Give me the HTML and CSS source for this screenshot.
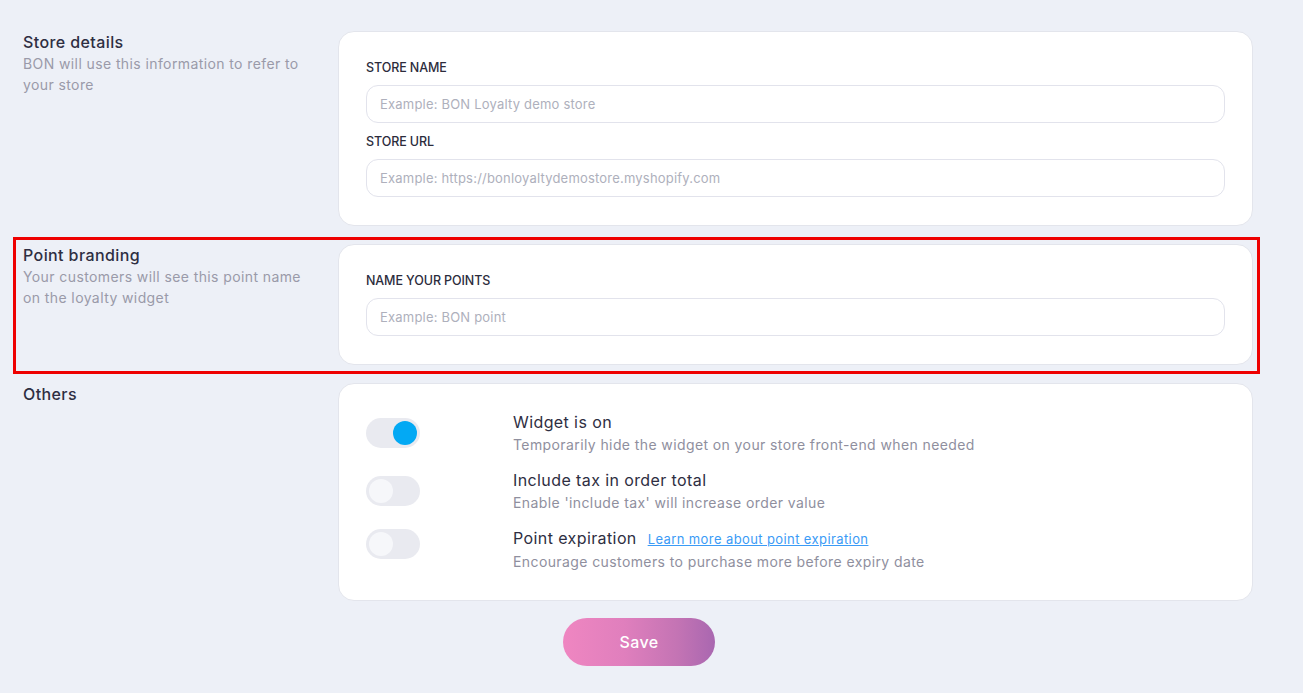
FILE: index.html
```html
<!DOCTYPE html>
<html lang="en">
<head>
<meta charset="utf-8">
<title>Settings</title>
<link rel="stylesheet" href="styles.css">
</head>
<body>
<main class="page">
  <section class="row">
    <div class="info">
      <h2 class="info-title">Store details</h2>
      <p class="info-desc">BON will use this information to refer to your store</p>
    </div>
    <div class="card card--form">
      <div class="field">
        <label class="field-label">STORE NAME</label>
        <input class="field-input" type="text" placeholder="Example: BON Loyalty demo store">
      </div>
      <div class="field">
        <label class="field-label">STORE URL</label>
        <input class="field-input" type="text" placeholder="Example: https://bonloyaltydemostore.myshopify.com">
      </div>
    </div>
  </section>

  <section class="row row--highlight">
    <div class="info">
      <h2 class="info-title">Point branding</h2>
      <p class="info-desc">Your customers will see this point name on the loyalty widget</p>
    </div>
    <div class="card card--form">
      <div class="field">
        <label class="field-label">NAME YOUR POINTS</label>
        <input class="field-input" type="text" placeholder="Example: BON point">
      </div>
    </div>
  </section>

  <section class="row">
    <div class="info">
      <h2 class="info-title">Others</h2>
    </div>
    <div class="card card--toggles">
      <div class="toggle-row">
        <div class="toggle-col"><span class="toggle toggle--on"><span class="knob"></span></span></div>
        <div class="toggle-text">
          <div class="toggle-title">Widget is on</div>
          <div class="toggle-desc">Temporarily hide the widget on your store front-end when needed</div>
        </div>
      </div>
      <div class="toggle-row">
        <div class="toggle-col"><span class="toggle"><span class="knob"></span></span></div>
        <div class="toggle-text">
          <div class="toggle-title">Include tax in order total</div>
          <div class="toggle-desc">Enable 'include tax' will increase order value</div>
        </div>
      </div>
      <div class="toggle-row toggle-row--raised">
        <div class="toggle-col"><span class="toggle"><span class="knob"></span></span></div>
        <div class="toggle-text">
          <div class="toggle-title">Point expiration <a class="toggle-link" href="#">Learn more about point expiration</a></div>
          <div class="toggle-desc">Encourage customers to purchase more before expiry date</div>
        </div>
      </div>
    </div>
  </section>

  <div class="actions">
    <button class="save-btn" type="button">Save</button>
  </div>
</main>
</body>
</html>
```
FILE: styles.css
```css
* { box-sizing: border-box; }

html, body {
  margin: 0;
  padding: 0;
}

body {
  background: #edf0f7;
  font-family: "Inter", "Noto Sans", sans-serif;
  color: #2e2e42;
  height: 693px;
  overflow: hidden;
}

.page {
  padding: 31px 0 0 23px;
  display: flex;
  flex-direction: column;
  gap: 18px;
}

.row {
  display: flex;
  position: relative;
  width: 1230px;
}

.row--highlight::after {
  content: "";
  position: absolute;
  left: -10px;
  top: -7px;
  right: -7px;
  bottom: -9px;
  border: 3px solid #ee0000;
  pointer-events: none;
}

.info {
  width: 315px;
  flex: none;
  padding-right: 20px;
}

.info-title {
  margin: 0;
  font-size: 16px;
  font-weight: 500;
  line-height: 22px;
  letter-spacing: 0.4px;
  color: #2e2e42;
}

.info-desc {
  margin: 0;
  font-size: 14px;
  line-height: 21px;
  letter-spacing: 0.4px;
  color: #9a9aa9;
}

.card {
  width: 915px;
  flex: none;
  background: #ffffff;
  border: 1px solid #e3e5ec;
  border-radius: 16px;
  padding: 26px 27px 28px 27px;
}

.card--form {
  display: flex;
  flex-direction: column;
  gap: 9px;
}

.field {
  display: flex;
  flex-direction: column;
}

.field-label {
  font-size: 12.5px;
  font-weight: 500;
  line-height: 20px;
  letter-spacing: -0.1px;
  color: #2c2c3c;
  margin-bottom: 7px;
}

.field-input {
  height: 38px;
  width: 100%;
  border: 1px solid #e2e3ec;
  border-radius: 12px;
  padding: 0 13px;
  font-family: inherit;
  font-size: 13px;
  letter-spacing: 0.2px;
  color: #2e2e42;
  background: #ffffff;
  outline: none;
}

.field-input::placeholder {
  color: #aeb0bc;
}

.card--toggles {
  display: flex;
  flex-direction: column;
  gap: 13px;
}

.toggle-row {
  display: flex;
  align-items: flex-start;
}

.toggle-col {
  width: 147px;
  flex: none;
  padding-top: 8px;
}

.toggle-row--raised .toggle-col {
  padding-top: 3px;
}

.toggle {
  display: flex;
  align-items: center;
  width: 54px;
  height: 30px;
  border-radius: 15px;
  background: #e9eaf0;
  padding: 0 3px;
}

.knob {
  width: 24px;
  height: 24px;
  border-radius: 50%;
  background: #f6f7fa;
}

.toggle--on {
  justify-content: flex-end;
}

.toggle--on .knob {
  background: #03a9f4;
}

.toggle-text {
  display: flex;
  flex-direction: column;
}

.toggle-title {
  font-size: 16px;
  line-height: 24px;
  letter-spacing: 0.4px;
  color: #2e2e42;
}

.toggle-link {
  font-size: 13px;
  letter-spacing: 0.4px;
  color: #3b9bf6;
  text-decoration: underline;
  margin-left: 6px;
}

.toggle-desc {
  font-size: 14px;
  line-height: 21px;
  letter-spacing: 0.4px;
  color: #8f8f9e;
}

.actions {
  padding-left: 540px;
  margin-top: -1px;
}

.save-btn {
  width: 152px;
  height: 48px;
  border: none;
  border-radius: 24px;
  background: linear-gradient(90deg, #ef86c1 0%, #e07fbd 40%, #c474b4 75%, #a967b0 100%);
  color: #ffffff;
  font-family: inherit;
  font-size: 16px;
  font-weight: 500;
  letter-spacing: 0.4px;
  cursor: pointer;
}
```
